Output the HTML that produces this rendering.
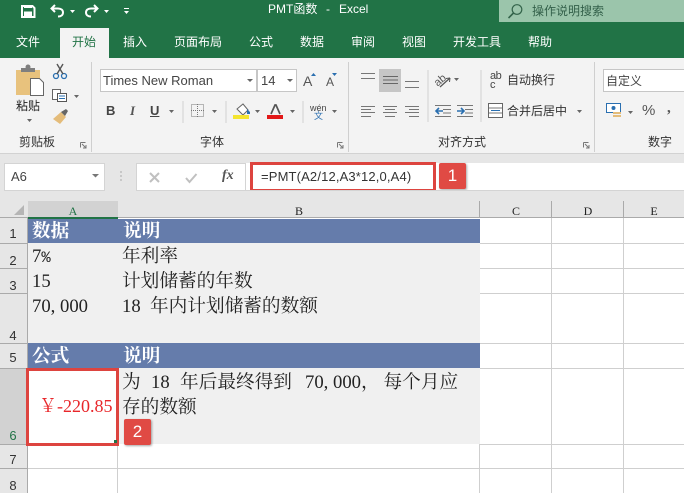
<!DOCTYPE html>
<html><head><meta charset="utf-8"><style>
html,body{margin:0;padding:0}
body{width:684px;height:493px;position:relative;overflow:hidden;background:#fff;font-family:"Liberation Sans","Noto Sans CJK SC",sans-serif;color:#333}
div{position:absolute;white-space:nowrap}
.t{font-size:12px;line-height:16px;color:#fff;top:34px}
.g{font-size:12px;line-height:16px;color:#333}
.s{font-family:"Liberation Serif","Noto Serif CJK SC",serif;font-size:18.67px;line-height:24px;color:#222;word-spacing:4.67px}
.h{font-family:"Liberation Serif","Noto Serif CJK SC",serif;font-size:18.67px;line-height:24px;color:#fff;font-weight:bold}
.m{font-family:"Liberation Mono",monospace;font-size:15.5px}
.cm{letter-spacing:4.67px}
.r{font-family:"Liberation Sans",sans-serif;font-size:13px;color:#333;left:0;width:26px;text-align:center;line-height:14px}
.c{font-family:"Liberation Serif",serif;font-size:12px;color:#222;line-height:14px;top:204px;text-align:center}
.l{background:#cfcfcf}
.k{background:#aaa}
.b{background:#e04a44;color:#fff;font-size:17px;text-align:center;border-radius:2px;box-shadow:1px 1px 2px rgba(0,0,0,.35)}
svg{position:absolute;overflow:visible}
</style></head><body>
<div style="left:0;top:0;width:684px;height:58px;background:#217346"></div>
<div style="left:499px;top:0;width:185px;height:22px;background:#9bc5ab"></div>
<div style="left:60px;top:28px;width:49px;height:30px;background:#f3f3f3"></div>
<div style="left:0;top:58px;width:684px;height:95px;background:#f3f3f3"></div>
<div style="left:0;top:153px;width:684px;height:38px;background:#e6e6e6;border-top:1px solid #d2d2d2;box-sizing:border-box"></div>

<svg style="left:0;top:0" width="140" height="24" viewBox="0 0 140 24">
<path d="M22 6h10.500l2 2v9H22z" fill="none" stroke="#fff" stroke-width="2"/><rect x="24" y="5" width="8" height="3" fill="#fff"/><rect x="24" y="11.500" width="8" height="6" fill="#fff"/>
<path d="M55 5l-3.500 3.500 3.500 3.500M52 8.500h6c3 0 5 1.500 5 4s-2 4-5 4" fill="none" stroke="#fff" stroke-width="2"/><path d="M70 10h5l-2.500 3z" fill="#fff"/>
<path d="M94 5l3.500 3.500-3.500 3.500M97 8.500h-6c-3 0-5 1.500-5 4s2 4 5 4" fill="none" stroke="#fff" stroke-width="2"/><path d="M104 10h5l-2.500 3z" fill="#fff"/>
<path d="M124 8h5v1h-5zM124 11h5l-2.500 3z" fill="#fff"/>
</svg>
<div style="left:268px;top:1px;font-size:12px;line-height:16px;color:#fff">PMT函数</div>
<div style="left:326px;top:1px;font-size:12px;line-height:16px;color:#fff">-</div>
<div style="left:339px;top:1px;font-size:12px;line-height:16px;color:#fff">Excel</div>
<svg style="left:505px;top:2px" width="20" height="18"><circle cx="12" cy="7.500" r="4.800" fill="none" stroke="#33634a" stroke-width="1.200"/><path d="M8.500 11l-5 5" stroke="#33634a" stroke-width="1.600"/></svg>
<div style="left:532px;top:3px;font-size:12px;line-height:16px;color:#33604a">操作说明搜索</div>

<div class="t" style="left:16px">文件</div>
<div class="t" style="left:72px;color:#217346">开始</div>
<div class="t" style="left:123px">插入</div>
<div class="t" style="left:174px">页面布局</div>
<div class="t" style="left:249px">公式</div>
<div class="t" style="left:300px">数据</div>
<div class="t" style="left:351px">审阅</div>
<div class="t" style="left:402px">视图</div>
<div class="t" style="left:453px">开发工具</div>
<div class="t" style="left:528px">帮助</div>

<!-- clipboard -->
<svg style="left:0;top:58px" width="95" height="80">
<rect x="16" y="12" width="24" height="25" fill="#e8c27d"/><rect x="21" y="10" width="14" height="4" fill="#7f7f7f"/><circle cx="28" cy="9" r="2.500" fill="#7f7f7f"/>
<path d="M30.500 20.500h9l4 4v13h-13z" fill="#fff" stroke="#666"/>
<circle cx="56" cy="18" r="2.500" fill="none" stroke="#2a6fb0" stroke-width="1.300"/><circle cx="64" cy="18" r="2.500" fill="none" stroke="#2a6fb0" stroke-width="1.300"/><path d="M57 16l6-10M63 16l-6-10" stroke="#555" stroke-width="1.400"/>
<path d="M52.500 31.500h8v10h-8z" fill="#fff" stroke="#666"/><path d="M57.500 35.500h9v8h-9z" fill="#fff" stroke="#555"/><path d="M59 38h6M59 40.500h6" stroke="#2a6fb0"/>
<path d="M74 37h5l-2.500 3zM27 61h5l-2.500 3z" fill="#666"/>
<path d="M53 61l8-7 5 5-6 7z" fill="#e4bc7a"/><path d="M61 54l5-3 2 2-3 5z" fill="#666"/>
</svg>
<div style="left:16px;top:98px;font-size:12px;line-height:16px;color:#222">粘贴</div>
<div class="g" style="left:19px;top:134px">剪贴板</div>
<div class="l" style="left:91px;top:62px;width:1px;height:90px"></div>
<div class="l" style="left:348px;top:62px;width:1px;height:90px"></div>
<div class="l" style="left:594px;top:62px;width:1px;height:90px"></div>

<!-- font -->
<div style="left:100px;top:69px;width:157px;height:23px;background:#fff;border:1px solid #c6c6c6;box-sizing:border-box"></div>
<div style="left:257px;top:69px;width:40px;height:23px;background:#fff;border:1px solid #c6c6c6;box-sizing:border-box"></div>
<div style="left:103px;top:73px;font-size:13px;line-height:16px;color:#444">Times New Roman</div>
<div style="left:261px;top:73px;font-size:13px;line-height:16px;color:#444">14</div>
<svg style="left:240px;top:75px" width="110" height="14"><path d="M7 4h6l-3 3zM47 4h6l-3 3z" fill="#666"/></svg>
<div style="left:303px;top:72px;font-size:14px;line-height:18px;color:#555">A</div>
<div style="left:326px;top:74px;font-size:12px;line-height:16px;color:#555">A</div>
<svg style="left:310px;top:71px" width="30" height="8"><path d="M1 5l2.500-3 2.500 3zM22 2h5l-2.500 3z" fill="#2a6fb0"/></svg>
<div style="left:106px;top:103px;font:bold 13px/16px 'Liberation Sans';color:#444">B</div>
<div style="left:130px;top:103px;font:italic bold 13px/16px 'Liberation Serif';color:#555">I</div>
<div style="left:150px;top:103px;font:bold 13px/16px 'Liberation Sans';color:#444;text-decoration:underline">U</div>
<svg style="left:165px;top:100px" width="185" height="24">
<path d="M4 10h5l-2.500 3zM47 10h5l-2.500 3zM90 10h5l-2.500 3zM125 10h5l-2.500 3zM167 10h5l-2.500 3z" fill="#666"/>
<path d="M18 1v22M61 1v22M138 1v22" stroke="#d2d2d2"/>
<rect x="26.500" y="4.500" width="12" height="12" fill="none" stroke="#777" stroke-dasharray="1 1"/><path d="M32.500 4v13M26 10.500h13" stroke="#777" stroke-dasharray="1 1"/>
<path d="M72 9l6-5 5 6-5 5z" fill="#fff" stroke="#666"/><path d="M82 9l3 3v2h-3z" fill="#2a6fb0"/><rect x="68" y="15" width="16" height="4" fill="#f4e530"/>
<path d="M106 14l4-9h1l4 9" fill="none" stroke="#555" stroke-width="1.700"/><rect x="102" y="15" width="16" height="4" fill="#e21818"/>
</svg>
<div style="left:310px;top:103px;font-size:9px;line-height:10px;color:#444">wén</div>
<div style="left:314px;top:111px;font-size:9px;line-height:11px;color:#2a6fb0">文</div>
<div class="g" style="left:200px;top:134px">字体</div>

<!-- alignment -->
<div style="left:379px;top:69px;width:22px;height:23px;background:#c6c6c6"></div>
<svg style="left:0;top:0" width="684" height="130" fill="none" stroke="#777">
<path d="M361 73.500h14M361 78.500h14"/>
<path d="M383 76.500h15M383 80h15M383 83.500h15" stroke="#666"/>
<path d="M405 81.500h14M405 87.500h14"/>
<path d="M361 106.500h14M361 109.500h10M361 112.500h14M361 116.500h10"/>
<path d="M383 106.500h14M385 109.500h10M383 112.500h14M385 116.500h10"/>
<path d="M405 106.500h14M409 109.500h10M405 112.500h14M409 116.500h10"/>
<path d="M428 70v52M481 70v52" stroke="#d2d2d2"/>
<path d="M440 87l10-9" stroke="#555" stroke-width="1.200"/><path d="M450 78l-4 .5M450 78l-.5 4" stroke="#555"/>
<path d="M435 105.500h16M443 109.500h8M443 113h8M435 116.500h16"/>
<path d="M457 105.500h16M465 109.500h8M465 113h8M457 116.500h16"/>
<path d="M443 111h-7m3-3l-3 3 3 3M457 111h7m-3-3l3 3-3 3" stroke="#2a6fb0" stroke-width="1.600"/>
</svg>
<svg style="left:0;top:0" width="684" height="130"><text x="434" y="83" font-size="11" font-family="Liberation Sans" fill="#555" transform="rotate(-40 441 80)">ab</text></svg>
<svg style="left:454px;top:77px" width="8" height="6"><path d="M0 1h5l-2.500 3z" fill="#666"/></svg>
<div style="left:490px;top:72px;font-size:11px;line-height:9px;color:#444;width:14px;letter-spacing:-.5px">ab<br>c</div>
<div class="g" style="left:507px;top:72px">自动换行</div>
<svg style="left:487px;top:102px" width="100" height="18"><rect x="1.500" y="1.500" width="14" height="14" fill="#fff" stroke="#666"/><path d="M2 6h13M2 11h13" stroke="#777"/><path d="M4 8.500h9" stroke="#2a6fb0"/><path d="M90 8h5l-2.500 3z" fill="#666"/></svg>
<div class="g" style="left:507px;top:103px">合并后居中</div>
<div class="g" style="left:438px;top:134px">对齐方式</div>
<svg style="left:0;top:141px" width="350" height="10" fill="none" stroke="#777"><path d="M80.500 1.500h5M80.500 1.500v5M82 3l4 4M86 4v3h-3"/><path d="M337.500 1.500h5M337.500 1.500v5M339 3l4 4M343 4v3h-3"/></svg>
<svg style="left:583px;top:141px" width="10" height="10" fill="none" stroke="#777"><path d="M.5 1.500h5M.5 1.500v5M2 3l4 4M6 4v3h-3"/></svg>

<!-- number -->
<div style="left:603px;top:69px;width:90px;height:23px;background:#fff;border:1px solid #c6c6c6;box-sizing:border-box"></div>
<div class="g" style="left:606px;top:73px;color:#444">自定义</div>
<svg style="left:605px;top:102px" width="30" height="18"><rect x="1.500" y="1.500" width="14" height="9" fill="#fff" stroke="#2a6fb0"/><circle cx="8.500" cy="6" r="2" fill="#2a6fb0"/><rect x="8" y="10" width="8" height="2" fill="#e4bc7a"/><rect x="8" y="13" width="8" height="2" fill="#e4bc7a"/><path d="M23 9h5l-2.500 3z" fill="#666"/></svg>
<div style="left:642px;top:102px;font-size:15px;line-height:18px;color:#555">%</div>
<div style="left:667px;top:99px;font:bold 15px/18px 'Liberation Serif';color:#555">,</div>
<div class="g" style="left:648px;top:134px">数字</div>

<!-- formula bar -->
<div style="left:4px;top:163px;width:101px;height:28px;background:#fff;border:1px solid #d4d4d4;box-sizing:border-box"></div>
<div style="left:11px;top:170px;font-size:13px;line-height:14px;color:#444">A6</div>
<svg style="left:91px;top:173px" width="12" height="6"><path d="M1 1h7l-3.500 3.500z" fill="#777"/></svg>
<svg style="left:120px;top:171px" width="3" height="12"><path d="M1 .5v1M1 4.500v1M1 8.500v1" stroke="#aaa" stroke-width="2"/></svg>
<div style="left:136px;top:163px;width:110px;height:28px;background:#fff;border:1px solid #d4d4d4;box-sizing:border-box"></div>
<svg style="left:148px;top:171px" width="50" height="14" fill="none" stroke="#c0c0c0" stroke-width="2"><path d="M2 2l9 9M11 2l-9 9"/><path d="M38 7l3.500 4 7-8"/></svg>
<div style="left:222px;top:169px;font:italic bold 14px/14px 'Liberation Serif';color:#555">fx</div>
<div style="left:246px;top:163px;width:438px;height:27px;background:#fff"></div>
<div style="left:250px;top:162px;width:186px;height:30px;border:3px solid #dd443f;box-sizing:border-box;background:#fff"></div>
<div style="left:261px;top:170px;font-size:13px;line-height:14px;color:#333;letter-spacing:.15px">=PMT(A2/12,A3*12,0,A4)</div>
<div class="b" style="left:439px;top:163px;width:27px;height:26px;line-height:26px">1</div>
<div style="left:246px;top:190px;width:438px;height:1px;background:#d4d4d4"></div>

<!-- grid headers -->
<div style="left:0;top:191px;width:684px;height:27px;background:#e6e6e6"></div>
<div style="left:0;top:218px;width:28px;height:275px;background:#e6e6e6"></div>
<div style="left:28px;top:201px;width:90px;height:16px;background:#d2d2d2"></div>
<div style="left:0;top:368px;width:28px;height:76px;background:#d2d2d2"></div>
<svg style="left:14px;top:205px" width="11" height="11"><path d="M10 0v10H0z" fill="#b5b5b5"/></svg>
<div class="c" style="left:28px;width:90px;color:#217346">A</div>
<div class="c" style="left:118px;width:362px">B</div>
<div class="c" style="left:480px;width:72px">C</div>
<div class="c" style="left:552px;width:72px">D</div>
<div class="c" style="left:624px;width:60px">E</div>
<div class="k" style="left:479px;top:201px;width:1px;height:17px"></div>
<div class="k" style="left:551px;top:201px;width:1px;height:17px"></div>
<div class="k" style="left:623px;top:201px;width:1px;height:17px"></div>
<div style="left:0;top:217px;width:684px;height:1px;background:#aaa"></div>
<div style="left:28px;top:218px;width:656px;height:275px;background:#fff"></div>
<div style="left:28px;top:217px;width:90px;height:2px;background:#217346"></div>
<!-- gridlines -->
<div class="l" style="left:480px;top:243px;width:204px;height:1px"></div>
<div class="l" style="left:480px;top:268px;width:204px;height:1px"></div>
<div class="l" style="left:480px;top:293px;width:204px;height:1px"></div>
<div class="l" style="left:480px;top:343px;width:204px;height:1px"></div>
<div class="l" style="left:480px;top:368px;width:204px;height:1px"></div>
<div class="l" style="left:480px;top:444px;width:204px;height:1px"></div>
<div class="l" style="left:28px;top:468px;width:656px;height:1px"></div>
<div class="l" style="left:551px;top:218px;width:1px;height:275px"></div>
<div class="l" style="left:623px;top:218px;width:1px;height:275px"></div>
<div class="l" style="left:117px;top:444px;width:1px;height:49px"></div>
<div class="l" style="left:479px;top:444px;width:1px;height:49px"></div>
<div class="k" style="left:0;top:243px;width:28px;height:1px"></div>
<div class="k" style="left:0;top:268px;width:28px;height:1px"></div>
<div class="k" style="left:0;top:293px;width:28px;height:1px"></div>
<div class="k" style="left:0;top:343px;width:28px;height:1px"></div>
<div class="k" style="left:0;top:368px;width:28px;height:1px"></div>
<div class="k" style="left:0;top:444px;width:28px;height:1px"></div>
<div class="k" style="left:0;top:468px;width:28px;height:1px"></div>
<div class="k" style="left:27px;top:218px;width:1px;height:275px"></div>
<!-- fills -->
<div style="left:28px;top:243px;width:452px;height:100px;background:#f0f0f0"></div>
<div style="left:28px;top:368px;width:452px;height:76px;background:#f0f0f0"></div>
<div style="left:28px;top:219px;width:452px;height:24px;background:#657cab"></div>
<div style="left:28px;top:343px;width:452px;height:25px;background:#657cab"></div>
<!-- row numbers -->
<div class="r" style="top:227px">1</div>
<div class="r" style="top:254px">2</div>
<div class="r" style="top:279px">3</div>
<div class="r" style="top:329px">4</div>
<div class="r" style="top:351px">5</div>
<div class="r" style="top:429px;color:#217346">6</div>
<div class="r" style="top:453px">7</div>
<div class="r" style="top:479px">8</div>
<!-- cells -->
<div class="h" style="left:32px;top:220px">数据</div>
<div class="h" style="left:123px;top:220px">说明</div>
<div class="s" style="left:32px;top:245px">7<span class="m">%</span></div>
<div class="s" style="left:122px;top:245px">年利率</div>
<div class="s" style="left:32px;top:270px">15</div>
<div class="s" style="left:122px;top:270px">计划储蓄的年数</div>
<div class="s" style="left:32px;top:295px">70<span class="cm">,</span>000</div>
<div class="s" style="left:122px;top:295px">18 年内计划储蓄的数额</div>
<div class="h" style="left:32px;top:345px">公式</div>
<div class="h" style="left:123px;top:345px">说明</div>
<div style="left:26px;top:368px;width:93px;height:78px;background:#fff;border:3px solid #dd443f;box-sizing:border-box"></div>
<div style="left:114px;top:440px;width:3px;height:3px;background:#217346"></div>
<div class="s" style="left:39px;top:394px;color:#e8262a;font-size:18px">￥-220.85</div>
<div class="s" style="left:122px;top:371px">为</div>
<div class="s" style="left:151px;top:371px">18</div>
<div class="s" style="left:180px;top:371px">年后最终得到</div>
<div class="s" style="left:305px;top:371px">70<span class="cm">,</span>000，</div>
<div class="s" style="left:383.500px;top:371px">每个月应</div>
<div class="s" style="left:122px;top:396px">存的数额</div>
<div class="b" style="left:124px;top:419px;width:27px;height:26px;line-height:26px">2</div>
</body></html>
